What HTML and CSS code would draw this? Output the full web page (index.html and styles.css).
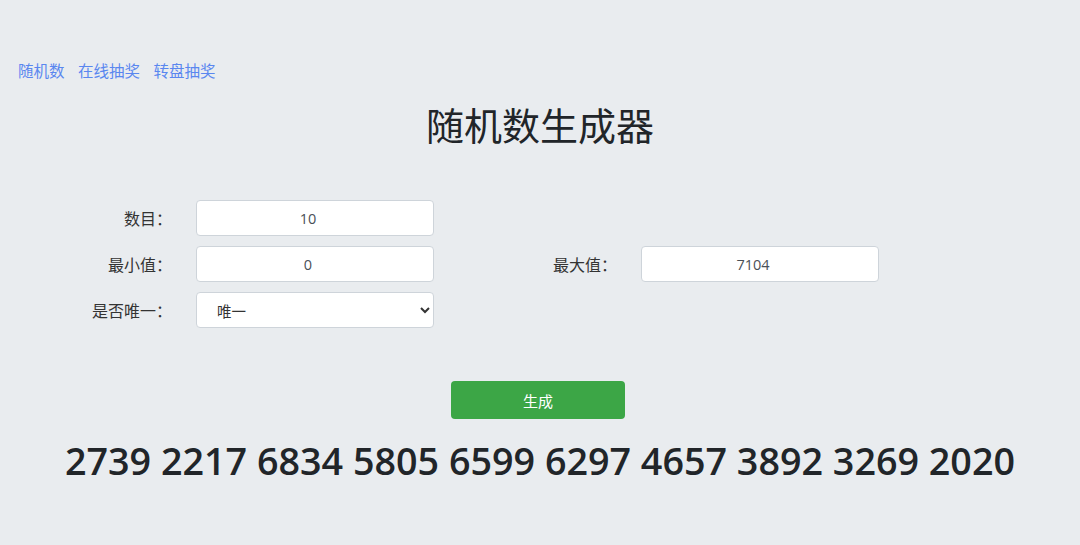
FILE: index.html
```html
<!DOCTYPE html>
<html lang="zh">
<head>
<meta charset="utf-8">
<title>随机数生成器</title>
<link rel="stylesheet" href="styles.css">
</head>
<body>
<nav class="nav">
  <a href="#">随机数</a>
  <a href="#">在线抽奖</a>
  <a href="#">转盘抽奖</a>
</nav>
<h1 class="title">随机数生成器</h1>
<form class="form">
  <label class="label">数目：</label>
  <input class="field" type="text" value="10">
  <span class="empty"></span>
  <span class="empty"></span>
  <label class="label">最小值：</label>
  <input class="field" type="text" value="0">
  <label class="label">最大值：</label>
  <input class="field" type="text" value="7104">
  <label class="label">是否唯一：</label>
  <select class="field select">
    <option>唯一</option>
    <option>不唯一</option>
  </select>
</form>
<div class="actions">
  <button class="btn" type="button">生成</button>
</div>
<div class="result">2739 2217 6834 5805 6599 6297 4657 3892 3269 2020</div>
</body>
</html>
```

FILE: styles.css
```css
html, body {
  margin: 0;
  padding: 0;
}
body {
  background: #e9ecef;
  color: #212529;
  font-family: "Noto Sans CJK SC", "Open Sans", sans-serif;
  width: 1080px;
  height: 545px;
  overflow: hidden;
}
.nav {
  display: flex;
  gap: 13.5px;
  padding: 58px 0 0 18px;
  font-size: 15.5px;
  line-height: 24px;
}
.nav a {
  color: #5a87ef;
  text-decoration: none;
}
.title {
  margin: 19px 0 0 0;
  text-align: center;
  font-size: 38px;
  font-weight: 400;
  line-height: 46px;
  color: #212529;
}
.form {
  margin-top: 53px;
  display: grid;
  grid-template-columns: 196px 238px 207px 238px;
  row-gap: 10px;
  align-items: center;
}
.label {
  text-align: right;
  padding-right: 24px;
  font-family: "Noto Sans CJK JP", "Noto Sans CJK SC", sans-serif;
  font-size: 16px;
  color: #333;
}
.field {
  box-sizing: border-box;
  height: 36px;
  width: 238px;
  border: 1px solid #ced4da;
  border-radius: 4px;
  background: #fff;
  text-align: center;
  font-family: "Open Sans", "Noto Sans CJK SC", sans-serif;
  font-size: 14.5px;
  color: #495057;
  padding: 0 20px 0 6px;
}
.select {
  text-align: left;
  padding: 0 6px 0 16px;
  font-family: "Noto Sans CJK SC", sans-serif;
  font-size: 14.5px;
  color: #333;
}
.actions {
  display: flex;
  justify-content: center;
  margin-top: 53px;
  padding-right: 4px;
}
.btn {
  width: 174px;
  height: 38px;
  border: none;
  border-radius: 4px;
  background: #3ca646;
  color: #fff;
  font-family: "Noto Sans CJK SC", sans-serif;
  font-size: 15px;
}
.result {
  margin-top: 19px;
  text-align: center;
  font-family: "Open Sans", sans-serif;
  font-weight: 600;
  font-size: 37.7px;
  line-height: 46px;
  color: #212529;
}
```
